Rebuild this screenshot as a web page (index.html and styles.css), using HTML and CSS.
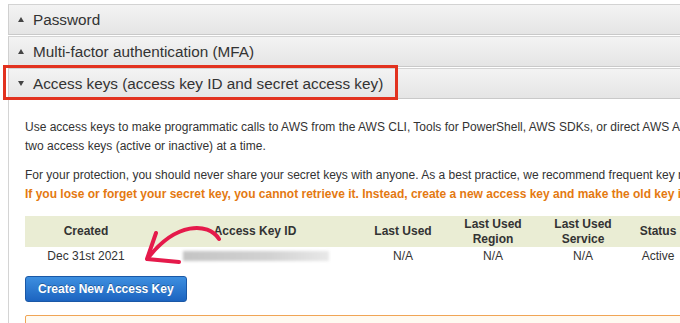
FILE: index.html
```html
<!DOCTYPE html>
<html lang="en">
<head>
    <meta charset="UTF-8">
    <meta name="viewport" content="width=device-width, initial-scale=1.0">
    <title>Security credentials</title>
    <link rel="stylesheet" href="styles.css">
</head>
<body>
    <div class="page">
        <!-- Collapsed sections -->
        <div class="section-header">
            <span class="caret caret-up"></span>
            <span class="section-title">Password</span>
        </div>
        <div class="section-header">
            <span class="caret caret-up"></span>
            <span class="section-title">Multi-factor authentication (MFA)</span>
        </div>
        <div class="section-header">
            <span class="caret caret-down"></span>
            <span class="section-title">Access keys (access key ID and secret access key)</span>
        </div>

        <!-- Open section -->
        <div class="section-body">
            <p class="intro">Use access keys to make programmatic calls to AWS from the AWS CLI, Tools for PowerShell, AWS SDKs, or direct AWS API calls. You can have a maximum of<br>two access keys (active or inactive) at a time.</p>

            <p class="intro">For your protection, you should never share your secret keys with anyone. As a best practice, we recommend frequent key rotation.<br>
                <strong class="warning">If you lose or forget your secret key, you cannot retrieve it. Instead, create a new access key and make the old key inactive.</strong></p>

            <table class="keys-table">
                <thead>
                    <tr>
                        <th class="col-created">Created</th>
                        <th class="col-id">Access Key ID</th>
                        <th class="col-used">Last Used</th>
                        <th class="col-region">Last Used<br>Region</th>
                        <th class="col-service">Last Used<br>Service</th>
                        <th class="col-status">Status</th>
                        <th class="col-actions">Actions</th>
                    </tr>
                </thead>
                <tbody>
                    <tr>
                        <td>Dec 31st 2021</td>
                        <td class="key-id"><span class="blurred"></span></td>
                        <td>N/A</td>
                        <td>N/A</td>
                        <td>N/A</td>
                        <td>Active</td>
                        <td>Delete</td>
                    </tr>
                </tbody>
            </table>

            <button class="create-button">Create New Access Key</button>

            <div class="notice"></div>
        </div>

        <!-- Annotations drawn over the screenshot -->
        <div class="highlight-box"></div>
        <svg class="arrow" width="680" height="323" viewBox="0 0 680 323">
            <path d="M219 239 C208 222 176 222 148 258" fill="none" stroke="#e51a4b" stroke-width="4" stroke-linecap="round"/>
            <path d="M156 233 L147 259 L179 262" fill="none" stroke="#e51a4b" stroke-width="4" stroke-linecap="round" stroke-linejoin="round"/>
        </svg>
    </div>
</body>
</html>
```

FILE: styles.css
```css
body {
    margin: 0;
    padding: 0;
    font-family: 'Liberation Sans', Arial, sans-serif;
    color: #333;
    background: #fff;
    overflow: hidden;
}

.page {
    position: relative;
    width: 680px;
    height: 323px;
    overflow: hidden;
    padding-top: 4px;
    box-sizing: border-box;
}

/* Section headers */
.section-header {
    display: flex;
    align-items: center;
    height: 31px;
    margin-left: 8px;
    width: 760px;
    background: linear-gradient(to bottom, #f3f3f3, #e5e5e5);
    border-top: 1px solid #d3d3d3;
    border-bottom: 1px solid #c9c9c9;
    border-left: 1px solid #d0d0d0;
    box-sizing: border-box;
    margin-bottom: 1px;
}

.section-title {
    font-size: 15.3px;
    color: #333;
}

.caret {
    width: 0;
    height: 0;
    margin-left: 9px;
    margin-right: 9px;
    border-left: 3.5px solid transparent;
    border-right: 3.5px solid transparent;
}

.caret-up {
    border-bottom: 5px solid #444;
}

.caret-down {
    border-top: 5px solid #444;
}

/* Open section */
.section-body {
    margin-left: 8px;
    border-left: 1px solid #d4d4d4;
    padding: 18px 0 0 16px;
    height: 240px;
    box-sizing: border-box;
    white-space: nowrap;
}

.intro {
    font-size: 12px;
    line-height: 18.5px;
    margin: 0 0 11px 0;
    color: #333;
}

.warning {
    color: #e47911;
    font-weight: bold;
}

/* Keys table */
.keys-table {
    border-collapse: collapse;
    table-layout: fixed;
    margin-top: 13px;
    font-size: 12px;
    width: 760px;
}

.keys-table th {
    background: #eaedd4;
    font-weight: bold;
    font-size: 12px;
    line-height: 15px;
    height: 31px;
    padding: 0;
    color: #333;
    text-align: center;
}

.keys-table td {
    text-align: center;
    height: 17px;
    padding: 0;
    color: #333;
}

.col-created { width: 122px; }
.col-id { width: 216px; }
.col-used { width: 80px; }
.col-region { width: 100px; }
.col-service { width: 80px; }
.col-status { width: 70px; }
.col-actions { width: 92px; }

.key-id {
    text-align: left;
}

.blurred {
    display: block;
    width: 146px;
    height: 10px;
    margin-left: 36px;
    background: linear-gradient(to right, #c4c4c4, #d2d2d2 60%, #e8e8e8);
    filter: blur(1.5px);
}

.create-button {
    display: block;
    margin-top: 12px;
    height: 26px;
    padding: 0 12px;
    font-family: 'Liberation Sans', Arial, sans-serif;
    font-size: 12px;
    font-weight: bold;
    color: #fff;
    background: linear-gradient(to bottom, #3d8fe0, #1c64c0);
    border: 1px solid #1a58a6;
    border-radius: 3px;
    text-shadow: 0 -1px 0 rgba(0, 0, 0, 0.3);
}

.notice {
    margin-top: 13px;
    height: 40px;
    width: 760px;
    border: 1px solid #f0a555;
    border-radius: 2px;
    background: #fffaf1;
}

/* Annotations */
.highlight-box {
    position: absolute;
    left: 3px;
    top: 65px;
    width: 389px;
    height: 29px;
    border: 3px solid #e2321f;
}

.arrow {
    position: absolute;
    left: 0;
    top: 0;
}
```
